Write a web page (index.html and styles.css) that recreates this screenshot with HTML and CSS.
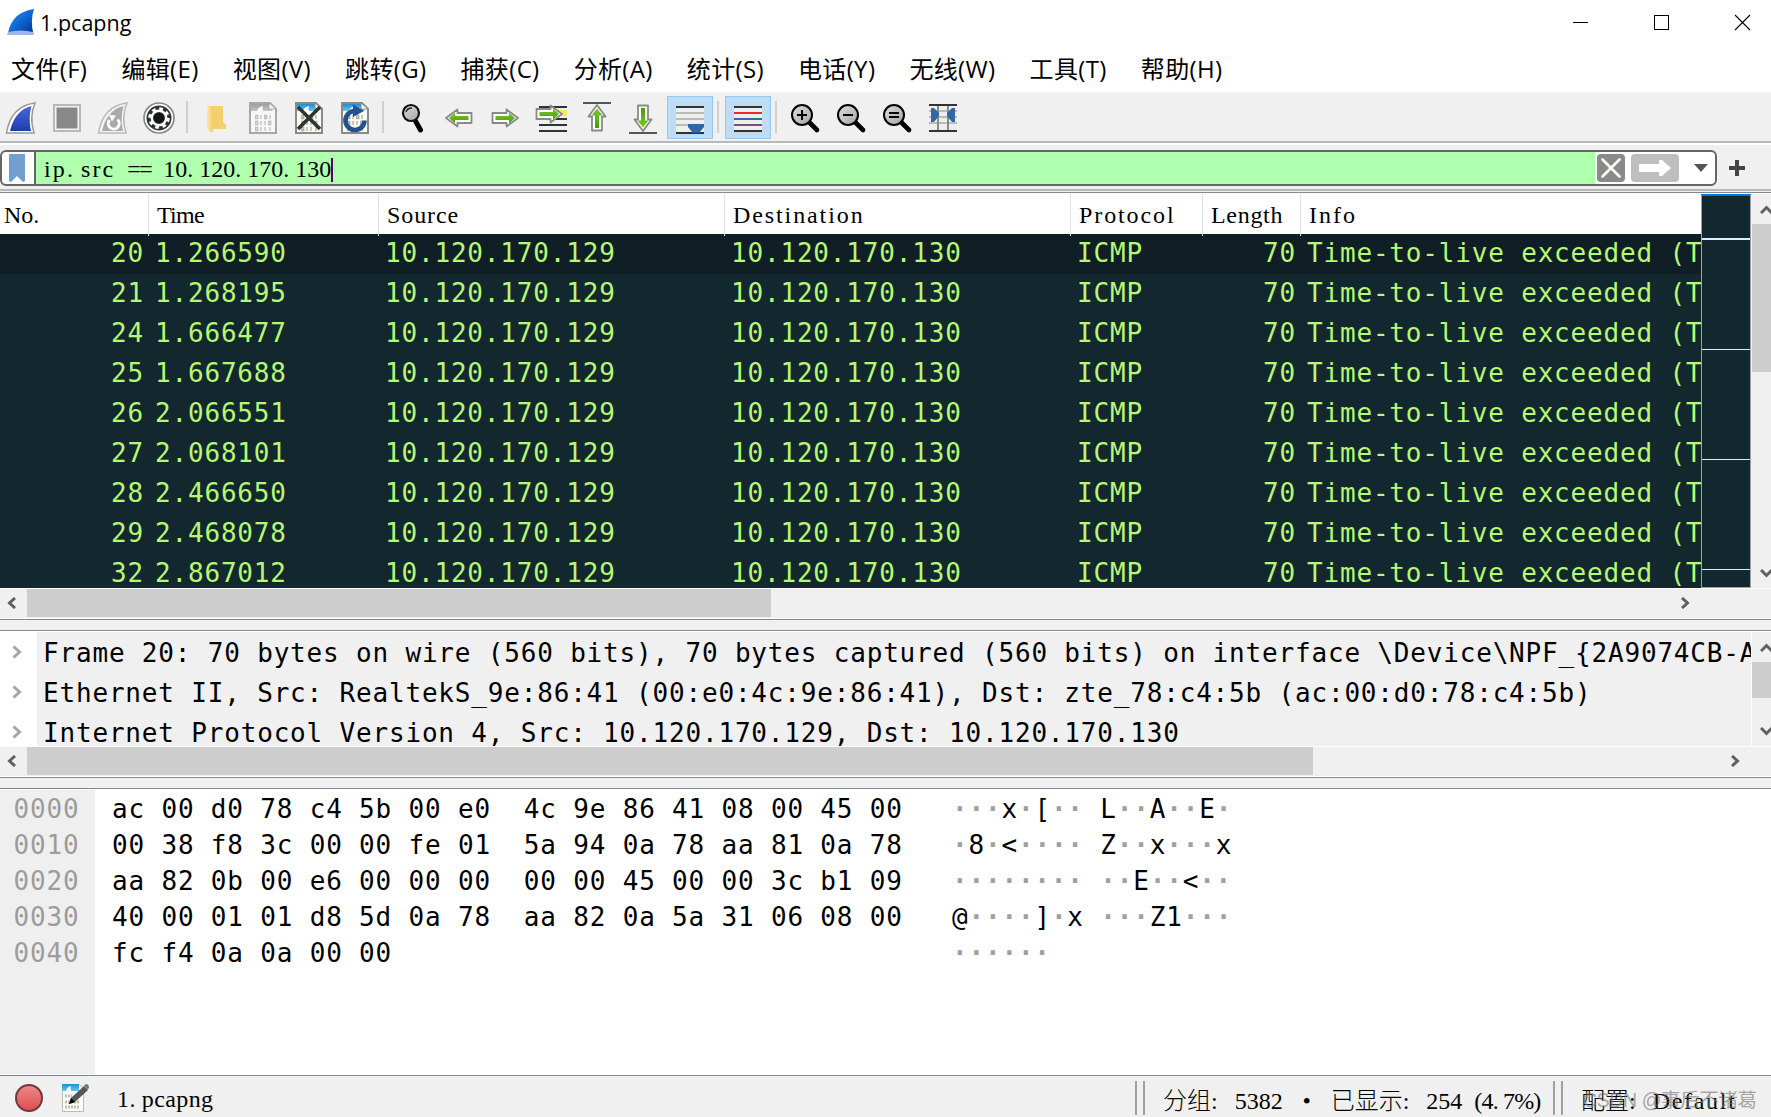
FILE: index.html
```
<!DOCTYPE html>
<html lang="zh-CN">
<head>
    <meta charset="UTF-8">
    <meta name="viewport" content="width=device-width, initial-scale=1.0">
    <title>1.pcapng</title>
    <link rel="stylesheet" href="styles.css">
</head>
<body>
    <!-- Shared gradients and symbols -->
    <svg class="defs" width="0" height="0">
        <defs>
            <linearGradient id="fin-blue" x1="0" y1="0" x2="1" y2="1">
                <stop offset="0" stop-color="#2a9af5"/>
                <stop offset="0.55" stop-color="#0b62d0"/>
                <stop offset="1" stop-color="#052f8c"/>
            </linearGradient>
            <linearGradient id="fin-start" x1="0" y1="0" x2="0" y2="1">
                <stop offset="0" stop-color="#4a66e0"/>
                <stop offset="1" stop-color="#1f3cae"/>
            </linearGradient>
            <linearGradient id="green" x1="0" y1="0" x2="0" y2="1">
                <stop offset="0" stop-color="#7acb2c"/>
                <stop offset="1" stop-color="#4a9a06"/>
            </linearGradient>
            <linearGradient id="folder" x1="0" y1="0" x2="1" y2="0">
                <stop offset="0" stop-color="#ffe9a4"/>
                <stop offset="1" stop-color="#f2cc66"/>
            </linearGradient>
            <linearGradient id="sky" x1="0" y1="0" x2="0" y2="1">
                <stop offset="0" stop-color="#1c8fd0"/>
                <stop offset="1" stop-color="#6cc4f0"/>
            </linearGradient>
            <linearGradient id="lens" x1="0" y1="0" x2="1" y2="1">
                <stop offset="0" stop-color="#dedede"/>
                <stop offset="1" stop-color="#a4a4a4"/>
            </linearGradient>
            <linearGradient id="red" x1="0" y1="0" x2="0" y2="1">
                <stop offset="0" stop-color="#ef8a8a"/>
                <stop offset="1" stop-color="#de4c4c"/>
            </linearGradient>
        </defs>
        <symbol id="arrow-right" viewBox="0 0 28 20">
            <path d="M1.500 5h14V1.500L27 10 15.500 18.500V15h-14z" fill="#fff" stroke="#888a85" stroke-width="1.800" stroke-linejoin="round"/>
            <path d="M4.500 8h13.500V4.500l6 5.500-6 5.500V12H4.500z" fill="url(#green)"/>
        </symbol>
        <symbol id="arrow-up" viewBox="0 0 20 28">
            <path d="M5 26.500v-14H1.500L10 1l8.500 11.500H15v14z" fill="#fff" stroke="#888a85" stroke-width="1.800" stroke-linejoin="round"/>
            <path d="M8 24V11.500H4.500l5.500-7 5.500 7H12V24z" fill="url(#green)"/>
        </symbol>
        <symbol id="magnifier" viewBox="0 0 32 32">
            <path d="M20 20l8 8" stroke="#000" stroke-width="4.600" stroke-linecap="round"/>
            <circle cx="13" cy="13" r="10" fill="url(#lens)" stroke="#000" stroke-width="2"/>
        </symbol>
        <symbol id="bits" viewBox="0 0 32 32">
            <path d="M3 1h20l6 6v24H3z" fill="#fbfbf2" stroke="#888a85" stroke-width="2"/>
            <path d="M4 2h18v3l4 4H4z" fill="url(#sky)"/>
            <path d="M22 1v6h7z" fill="#fff" stroke="#888a85"/>
            <path d="M10 9q1-4 6-5-1 3 0 5z" fill="#fff"/>
            <g fill="none" stroke="#aaa" stroke-width="1.300">
                <path d="M8.700 13.500h2v3h-2zM14 13v4M17.700 13.500h2v3h-2zM23 13v4"/>
                <path d="M8.700 19.500h2v3h-2zM14 19v4M18 19v4M21.700 19.500h2v3h-2z"/>
                <path d="M8.700 25.500h2v3h-2zM14 25v4M18 25v4M23 25v4"/>
            </g>
        </symbol>
    </svg>

    <div class="titlebar">
        <svg class="app-icon" width="28" height="28" viewBox="0 0 28 28">
            <path d="M1 24Q5 3 27 0q-4 12-.5 25z" fill="url(#fin-blue)"/>
            <path d="M1 23q13-3 25 0l.500 3H0z" fill="#9db9e6"/>
        </svg>
        <span class="title">1.pcapng</span>
        <div class="window-buttons">
            <svg width="17" height="17" viewBox="0 0 17 17"><path d="M1 8.500h15" stroke="#000"/></svg>
            <svg width="17" height="17" viewBox="0 0 17 17"><rect x="1.500" y="1.500" width="14" height="14" fill="none" stroke="#000"/></svg>
            <svg width="17" height="17" viewBox="0 0 17 17"><path d="M1 1l15 15M16 1L1 16" stroke="#000" stroke-width="1.100"/></svg>
        </div>
    </div>

    <div class="menubar">
        <span>文件(F)</span>
        <span>编辑(E)</span>
        <span>视图(V)</span>
        <span>跳转(G)</span>
        <span>捕获(C)</span>
        <span>分析(A)</span>
        <span>统计(S)</span>
        <span>电话(Y)</span>
        <span>无线(W)</span>
        <span>工具(T)</span>
        <span>帮助(H)</span>
    </div>

    <div class="toolbar">
        <div class="tool">
            <svg viewBox="0 0 32 32"><path d="M1.500 31Q6 4 30 1q-6 14-1 30z" fill="#fff" stroke="#999" stroke-width="1.500"/><path d="M5 29Q10 8 26.500 4q-3.500 12-.5 25z" fill="url(#fin-start)"/></svg>
        </div>
        <div class="tool">
            <svg viewBox="0 0 32 32"><rect x="3" y="3" width="26" height="26" fill="#f4f4f4" stroke="#b8b8b8" stroke-width="2"/><rect x="5.500" y="5.500" width="21" height="21" fill="#888"/></svg>
        </div>
        <div class="tool">
            <svg viewBox="0 0 32 32"><path d="M1.500 31Q6 4 30 1q-6 14-1 30z" fill="#f4f4f4" stroke="#b8b8b8" stroke-width="1.500"/><path d="M5 29Q10 8 26.500 4q-3.500 12-.5 25z" fill="#a9a9a9"/><path d="M12.500 18a5.500 5.500 0 1 0 8-.5" fill="none" stroke="#fff" stroke-width="3"/><path d="M12 13l7 .500-4 6z" fill="#fff"/></svg>
        </div>
        <div class="tool">
            <svg viewBox="0 0 32 32">
                <circle cx="16" cy="16" r="15" fill="#fff" stroke="#888" stroke-width="1.700"/>
                <circle cx="16" cy="16" r="12.500" fill="#2e3436"/>
                <circle cx="16" cy="16" r="7.200" fill="none" stroke="#fff" stroke-width="2.400"/>
                <circle cx="16" cy="16" r="9.400" fill="none" stroke="#fff" stroke-width="2.800" stroke-dasharray="3.700 3.680"/>
                <circle cx="16" cy="16" r="5.300" fill="#151515"/>
            </svg>
        </div>
        <div class="separator"></div>
        <div class="tool">
            <svg viewBox="0 0 32 32"><path d="M8 4h14v16l3 3v4H11z" fill="#f3cf6e"/><path d="M6 3l6 4v22l-1 2-5-4z" fill="url(#folder)"/></svg>
        </div>
        <div class="tool grayed">
            <svg viewBox="0 0 32 32"><use href="#bits"/></svg>
        </div>
        <div class="tool">
            <svg viewBox="0 0 32 32"><use href="#bits"/><path d="M5 5l22 22M27 5L5 27" stroke="#2e3436" stroke-width="3.600"/></svg>
        </div>
        <div class="tool">
            <svg viewBox="0 0 32 32"><use href="#bits"/><path d="M15 9a9.500 9.500 0 1 0 10.500 9.500" fill="none" stroke="#24508f" stroke-width="4.600"/><path d="M14 2.500l11 6.500-11 6z" fill="#24508f"/></svg>
        </div>
        <div class="separator"></div>
        <div class="tool">
            <svg viewBox="0 0 32 32"><path d="M18.500 19l5 9" stroke="#000" stroke-width="5" stroke-linecap="round"/><circle cx="14" cy="11" r="8" fill="url(#lens)" stroke="#111" stroke-width="2.200"/><path d="M9 10q1-4 6-4" fill="none" stroke="#222" stroke-width="1.300"/></svg>
        </div>
        <div class="tool">
            <svg viewBox="0 0 32 32"><use href="#arrow-right" x="2" y="6" width="28" height="20" transform="matrix(-1 0 0 1 32 0)"/></svg>
        </div>
        <div class="tool">
            <svg viewBox="0 0 32 32"><use href="#arrow-right" x="2" y="6" width="28" height="20"/></svg>
        </div>
        <div class="tool">
            <svg viewBox="0 0 32 32"><path d="M4 5h28M4 17h28M4 23h28M4 29h28" stroke="#2e3436" stroke-width="2"/><path d="M20 8h12v6H20z" fill="#fce94f"/><use href="#arrow-right" x="0" y="2" width="28" height="20"/></svg>
        </div>
        <div class="tool">
            <svg viewBox="0 0 32 32"><path d="M2 1h28" stroke="#555753" stroke-width="2"/><use href="#arrow-up" x="6" y="2" width="20" height="28"/></svg>
        </div>
        <div class="tool">
            <svg viewBox="0 0 32 32"><path d="M2 31h28" stroke="#555753" stroke-width="2"/><use href="#arrow-up" x="6" y="2" width="20" height="28" transform="matrix(1 0 0 -1 0 32)"/></svg>
        </div>
        <div class="tool active first-active">
            <svg viewBox="0 0 32 32"><path d="M2 5h28v25H2z" fill="#eeeeec"/><path d="M2 11h28M2 17h28M2 23h28" stroke="#babdb6" stroke-width="2"/><path d="M2 5h28M2 31h28" stroke="#2e3436" stroke-width="2"/><path d="M14 22h16v3l-5 6h-6l-5-6z" fill="#3465a4"/></svg>
        </div>
        <div class="separator short"></div>
        <div class="tool active">
            <svg viewBox="0 0 32 32"><path d="M2 5h28v25H2z" fill="#eeeeec"/><path d="M2 5h28M2 29h28" stroke="#2e3436" stroke-width="2"/><path d="M2 11h28" stroke="#ef2929" stroke-width="2"/><path d="M2 17h28" stroke="#3465a4" stroke-width="2"/><path d="M2 23h28" stroke="#75507b" stroke-width="2"/></svg>
        </div>
        <div class="separator short"></div>
        <div class="tool">
            <svg viewBox="0 0 32 32"><use href="#magnifier"/><path d="M8 13h10M13 8v10" stroke="#000" stroke-width="2"/></svg>
        </div>
        <div class="tool">
            <svg viewBox="0 0 32 32"><use href="#magnifier"/><path d="M8 13h10" stroke="#000" stroke-width="2"/></svg>
        </div>
        <div class="tool">
            <svg viewBox="0 0 32 32"><use href="#magnifier"/><path d="M8 11h10M8 15h10" stroke="#000" stroke-width="2"/></svg>
        </div>
        <div class="tool">
            <svg viewBox="0 0 32 32"><path d="M2 3h28v26H2z" fill="#eeeeec"/><path d="M2 9h28M2 15h28M2 21h28" stroke="#babdb6" stroke-width="2"/><path d="M11 2v28M21 2v28" stroke="#888a85" stroke-width="2"/><path d="M2 3h28M2 29h28" stroke="#2e3436" stroke-width="2"/><path d="M4 6h3l5 5v3l-5 6H4zM28 6h-3l-5 5v3l5 6h3z" fill="#3465a4"/></svg>
        </div>
    </div>

    <div class="filterbar">
        <div class="filter">
            <div class="bookmark"><svg width="16" height="28" viewBox="0 0 16 28"><path d="M0 1q0-1 1-1h14q1 0 1 1v26l-2 1-6-6-6 6-2-1z" fill="#729fcf"/></svg></div>
            <div class="filter-text"><span class="wide">ip<i>.</i>src</span> <span class="tight">==</span> 10<i>.</i>120<i>.</i>170<i>.</i>130<b class="caret"></b></div>
            <div class="filter-buttons">
                <svg width="28" height="28" viewBox="0 0 28 28"><rect width="28" height="28" rx="4" fill="#888a85"/><path d="M5.500 5.500l17 17M22.500 5.500l-17 17" stroke="#fff" stroke-width="2.600" stroke-linecap="round"/></svg>
                <svg width="48" height="28" viewBox="0 0 48 28"><rect width="48" height="28" rx="4" fill="#bebebe"/><path d="M9 10h19V6h3l9 8-9 8h-3v-4H9q-1 0-1-1v-6q0-1 1-1z" fill="#fff"/></svg>
                <svg class="dropdown" width="14" height="8" viewBox="0 0 14 8"><path d="M0 0h14L7 8z" fill="#555753"/></svg>
            </div>
        </div>
        <svg width="16" height="16" viewBox="0 0 16 16"><path d="M8 0v16M0 8h16" stroke="#444" stroke-width="4"/></svg>
    </div>

    <div class="pane packets">
        <div class="pane-body">
            <div class="list">
                <div class="row header">
                    <span>No.</span><span>Time</span><span>Source</span><span>Destination</span><span>Protocol</span><span>Length</span><span>Info</span>
                </div>
                <div class="rows">
                    <div class="row selected"><span>20</span><span>1.266590</span><span>10.120.170.129</span><span>10.120.170.130</span><span>ICMP</span><span>70</span><span>Time-to-live exceeded (T</span></div>
                    <div class="row"><span>21</span><span>1.268195</span><span>10.120.170.129</span><span>10.120.170.130</span><span>ICMP</span><span>70</span><span>Time-to-live exceeded (T</span></div>
                    <div class="row"><span>24</span><span>1.666477</span><span>10.120.170.129</span><span>10.120.170.130</span><span>ICMP</span><span>70</span><span>Time-to-live exceeded (T</span></div>
                    <div class="row"><span>25</span><span>1.667688</span><span>10.120.170.129</span><span>10.120.170.130</span><span>ICMP</span><span>70</span><span>Time-to-live exceeded (T</span></div>
                    <div class="row"><span>26</span><span>2.066551</span><span>10.120.170.129</span><span>10.120.170.130</span><span>ICMP</span><span>70</span><span>Time-to-live exceeded (T</span></div>
                    <div class="row"><span>27</span><span>2.068101</span><span>10.120.170.129</span><span>10.120.170.130</span><span>ICMP</span><span>70</span><span>Time-to-live exceeded (T</span></div>
                    <div class="row"><span>28</span><span>2.466650</span><span>10.120.170.129</span><span>10.120.170.130</span><span>ICMP</span><span>70</span><span>Time-to-live exceeded (T</span></div>
                    <div class="row"><span>29</span><span>2.468078</span><span>10.120.170.129</span><span>10.120.170.130</span><span>ICMP</span><span>70</span><span>Time-to-live exceeded (T</span></div>
                    <div class="row"><span>32</span><span>2.867012</span><span>10.120.170.129</span><span>10.120.170.130</span><span>ICMP</span><span>70</span><span>Time-to-live exceeded (T</span></div>
                </div>
            </div>
            <div class="minimap"><i></i><i></i><i></i><i></i></div>
            <div class="vscroll">
                <svg width="14" height="9" viewBox="0 0 14 9"><path d="M1 8l5.500-5.500L12 8" fill="none" stroke="#606060" stroke-width="3"/></svg>
                <div class="thumb"></div>
                <svg width="14" height="9" viewBox="0 0 14 9"><path d="M1 1l5.500 5.500L12 1" fill="none" stroke="#606060" stroke-width="3"/></svg>
            </div>
        </div>
        <div class="hscroll">
            <svg width="9" height="12" viewBox="0 0 9 12"><path d="M8 1L2.500 6 8 11" fill="none" stroke="#606060" stroke-width="3"/></svg>
            <div class="thumb"></div>
            <svg width="9" height="12" viewBox="0 0 9 12"><path d="M1 1l5.500 5L1 11" fill="none" stroke="#606060" stroke-width="3"/></svg>
        </div>
    </div>

    <div class="pane details">
        <div class="pane-body">
            <div class="tree">
                <div class="node"><svg width="10" height="14" viewBox="0 0 10 14"><path d="M1.500 1.500L7.500 7l-6 5.500" fill="none" stroke="#a6a6a6" stroke-width="3"/></svg><span>Frame 20: 70 bytes on wire (560 bits), 70 bytes captured (560 bits) on interface \Device\NPF_{2A9074CB-A</span></div>
                <div class="node"><svg width="10" height="14" viewBox="0 0 10 14"><path d="M1.500 1.500L7.500 7l-6 5.500" fill="none" stroke="#a6a6a6" stroke-width="3"/></svg><span>Ethernet II, Src: RealtekS_9e:86:41 (00:e0:4c:9e:86:41), Dst: zte_78:c4:5b (ac:00:d0:78:c4:5b)</span></div>
                <div class="node"><svg width="10" height="14" viewBox="0 0 10 14"><path d="M1.500 1.500L7.500 7l-6 5.500" fill="none" stroke="#a6a6a6" stroke-width="3"/></svg><span>Internet Protocol Version 4, Src: 10.120.170.129, Dst: 10.120.170.130</span></div>
            </div>
            <div class="vscroll">
                <svg width="14" height="9" viewBox="0 0 14 9"><path d="M1 8l5.500-5.500L12 8" fill="none" stroke="#606060" stroke-width="3"/></svg>
                <div class="thumb"></div>
                <svg width="14" height="9" viewBox="0 0 14 9"><path d="M1 1l5.500 5.500L12 1" fill="none" stroke="#606060" stroke-width="3"/></svg>
            </div>
        </div>
        <div class="hscroll">
            <svg width="9" height="12" viewBox="0 0 9 12"><path d="M8 1L2.500 6 8 11" fill="none" stroke="#606060" stroke-width="3"/></svg>
            <div class="thumb"></div>
            <svg width="9" height="12" viewBox="0 0 9 12"><path d="M1 1l5.500 5L1 11" fill="none" stroke="#606060" stroke-width="3"/></svg>
        </div>
    </div>

    <div class="pane hexdump">
<pre class="offsets">0000
0010
0020
0030
0040</pre>
<pre class="bytes">ac 00 d0 78 c4 5b 00 e0  4c 9e 86 41 08 00 45 00
00 38 f8 3c 00 00 fe 01  5a 94 0a 78 aa 81 0a 78
aa 82 0b 00 e6 00 00 00  00 00 45 00 00 3c b1 09
40 00 01 01 d8 5d 0a 78  aa 82 0a 5a 31 06 08 00
fc f4 0a 0a 00 00</pre>
<pre class="ascii">···<b>x</b>·<b>[</b>·· <b>L</b>··<b>A</b>··<b>E</b>·
·<b>8</b>·<b>&lt;</b>···· <b>Z</b>··<b>x</b>···<b>x</b>
········ ··<b>E</b>··<b>&lt;</b>··
<b>@</b>····<b>]</b>·<b>x</b> ···<b>Z1</b>···
······</pre>
    </div>

    <div class="statusbar">
        <svg class="expert" width="28" height="28" viewBox="0 0 28 28"><circle cx="14" cy="14" r="13" fill="url(#red)" stroke="#6b3a3e" stroke-width="2"/></svg>
        <svg class="comment" width="28" height="28" viewBox="0 0 28 28">
            <path d="M.500.500h17l4 4v23H.500z" fill="#fbfbf4" stroke="#bbb"/>
            <path d="M0 0h17v7H0z" fill="url(#sky)"/>
            <path d="M4 7q1-4 5-5-1 2 0 5z" fill="#fff"/>
            <path d="M3 12h7M3 18h15M3 23h15" stroke="#bbb" stroke-width="3" stroke-dasharray="2 1"/>
            <path d="M7 20l2-6L22 2l4 4-13 12z" fill="#555753"/>
            <path d="M7 20l2-6 4 4z" fill="#000"/>
            <path d="M22 1.500l2-1.500q3 0 3 4l-1.500 1.500z" fill="#777"/>
        </svg>
        <span class="file">1<i>.</i>pcapng</span>
        <div class="status packets-count"><span><em>分组</em><i>:</i> 5382 <u>•</u> <em>已显示</em><i>:</i> 254 <span class="percent">(4<i>.</i>7%)</span></span></div>
        <div class="status profile"><span><em>配置</em><i>:</i> <span class="default">Default</span></span></div>
        <span class="watermark">CSDN @事后不诸葛</span>
    </div>
</body>
</html>
```
FILE: styles.css
```
* {
    box-sizing: border-box;
}
body {
    margin: 0;
    width: 1771px;
    height: 1117px;
    overflow: hidden;
    display: flex;
    flex-direction: column;
    background: #f0f0f0;
    color: #000;
    font-family: "Liberation Serif", "Noto Sans CJK SC", serif;
    font-size: 24px;
}
svg {
    display: block;
    flex-shrink: 0;
}
.defs {
    position: absolute;
}

/* Title and menu */
.titlebar {
    height: 45px;
    display: flex;
    align-items: center;
    padding: 0 20px 0 7px;
    background: #fff;
    font-family: "Open Sans", sans-serif;
    font-size: 21.5px;
}
.title {
    margin-left: 5px;
}
.window-buttons {
    margin-left: auto;
    display: flex;
    gap: 64px;
}
.menubar {
    height: 48px;
    display: flex;
    align-items: center;
    gap: 34.1px;
    padding: 0 11px;
    background: #fff;
    border-bottom: 1px solid #f4f4f4;
    font-family: "Open Sans", "Noto Sans CJK SC", sans-serif;
    font-size: 24px;
    letter-spacing: 0.35px;
    line-height: 46px;
    white-space: nowrap;
}

/* Toolbar */
.toolbar {
    height: 52px;
    display: flex;
    padding: 3px 0 0;
    border-bottom: 2px solid #fff;
    box-shadow: inset 0 -2px #b8b8b8;
}
.tool {
    width: 46px;
    height: 43px;
    display: flex;
    align-items: center;
    justify-content: center;
}
.tool:first-child {
    margin-left: -2px;
}
.tool svg {
    width: 32px;
    height: 32px;
    margin-top: 1px;
}
.tool.active {
    background: #c0dcf3;
    border: 1px solid #90c8f6;
}
.first-active {
    margin-left: 1px;
}
.grayed {
    filter: grayscale(1);
    opacity: 0.7;
}
.separator {
    width: 2px;
    height: 32px;
    margin: 5px 6px 0 4px;
    background: #d0d0d0;
}
.separator.short {
    margin-left: 4px;
}
.separator.short + .tool:not(.active) {
    margin-left: -1px;
}

/* Display filter */
.filterbar {
    height: 47px;
    display: flex;
    align-items: center;
    gap: 12px;
    border-bottom: 1px solid #f0f0f0;
    box-shadow: inset 0 -2px #b8b8b8;
}
.filter {
    width: 1717px;
    height: 36px;
    display: flex;
    border: 2px solid #666;
    border-radius: 6px;
    background: #fff;
    overflow: hidden;
}
.bookmark {
    width: 34px;
    padding: 2px 0 0 7px;
    border-right: 2px solid #666;
}
.filter-text {
    width: 1559px;
    padding-left: 8px;
    background: #afffaf;
    line-height: 34px;
    word-spacing: 6px;
    white-space: pre;
}

/* Full-cell punctuation */
i {
    margin-right: 6px;
    font-style: normal;
}
.wide {
    letter-spacing: 2.1px;
}
.tight {
    letter-spacing: -1.5px;
}
.caret {
    display: inline-block;
    width: 2px;
    height: 24px;
    vertical-align: -5px;
    background: #5c005c;
}
.filter-buttons {
    display: flex;
    align-items: center;
    gap: 6px;
    padding-left: 2px;
}
.dropdown {
    margin-left: 9px;
}

/* Panes */
.pane {
    border-top: 1px solid #828790;
    border-bottom: 1px solid #828790;
    margin-bottom: 10px;
}
.pane-body {
    display: flex;
    border-top: 1px solid #fff;
    border-bottom: 1px solid #fff;
}
.packets .pane-body {
    height: 396px;
}
.list {
    width: 1701px;
    overflow: hidden;
    background: #12272e;
}
.row {
    display: grid;
    grid-template-columns: 149px 230px 346px 346px 132px 98px 400px;
    height: 40px;
    line-height: 38px;
    white-space: pre;
}
.header {
    background: #fff;
    line-height: 42px;
}
.header span {
    padding: 0 0 0 8px;
    border-right: 1px solid #e2e2e2;
}
.header span:first-child {
    padding-left: 4px;
}
.header span:nth-child(2) {
    letter-spacing: -0.7px;
}
.header span:nth-child(3) {
    letter-spacing: 0.9px;
}
.header span:nth-child(4),
.header span:nth-child(5) {
    letter-spacing: 1.9px;
}
.header span:nth-child(6) {
    letter-spacing: 0.7px;
}
.header span:last-child {
    border: 0;
    letter-spacing: 2px;
}
.rows,
.tree,
.hexdump {
    font-family: "DejaVu Sans Mono", monospace;
    font-size: 26px;
    letter-spacing: 0.82px;
}
.rows {
    color: #b7f774;
}
.rows span {
    padding-left: 6px;
}
.rows span:first-child,
.rows span:nth-child(6) {
    text-align: right;
    padding-right: 5px;
}
.selected {
    background: #101f26;
}
.minimap {
    width: 50px;
    padding-top: 42px;
    border: 1px solid #a0a0a0;
    border-top: 2px solid #0078d7;
    background: #12272e;
}
.minimap i {
    display: block;
    height: 1px;
    margin: 0 0 109px;
    background: #daeeff;
}
.minimap i:first-child {
    height: 2px;
}
.vscroll {
    width: 19px;
    margin-left: auto;
    display: flex;
    flex-direction: column;
    overflow: hidden;
}
.vscroll svg {
    margin: 11px 0 10px 8px;
}
.vscroll svg:last-child {
    margin: auto 0 10px 8px;
}
.thumb {
    background: #cdcdcd;
}
.packets .vscroll .thumb {
    height: 148px;
}
.details .vscroll .thumb {
    height: 36px;
}
.hscroll {
    height: 30px;
    display: flex;
    align-items: center;
    padding: 0 81px 1px 7px;
    border-bottom: 1px solid #fff;
}
.hscroll .thumb {
    width: 744px;
    height: 28px;
    margin: 0 auto 0 11px;
}
.details .hscroll {
    padding-right: 31px;
}
.details .hscroll .thumb {
    width: 1286px;
}

/* Packet details */
.details .pane-body {
    height: 116px;
}
.tree {
    width: 1752px;
    border-right: 1px solid #fff;
    overflow: hidden;
}
.node {
    height: 40px;
    display: flex;
    align-items: center;
    padding-left: 12px;
    background: linear-gradient(to right, #fff 37px, #f0f0f0 37px);
    line-height: 40px;
    white-space: pre;
}
.node span {
    margin: 2px 0 0 21px;
}

/* Packet bytes */
.hexdump {
    height: 288px;
    margin-bottom: 0;
    display: flex;
    background: #fff;
}
.hexdump pre {
    margin: 1px 0;
    padding-top: 1px;
    font: inherit;
    line-height: 36px;
}
.hexdump .offsets {
    width: 95px;
    padding-left: 13.5px;
    background: #efefef;
    color: #9c9c9c;
}
.hexdump .bytes {
    width: 840px;
    margin-left: 17px;
}
.hexdump .ascii {
    color: #a0a0a0;
    font-weight: bold;
}
.ascii b {
    font-weight: normal;
    color: #000;
}

/* Status bar */
.statusbar {
    position: relative;
    flex: 1;
    display: flex;
    align-items: center;
    padding: 3px 0 0 15px;
    word-spacing: 6px;
    white-space: pre;
}
.statusbar em {
    font-style: normal;
    font-weight: 300;
}
.statusbar u {
    display: inline-block;
    width: 24px;
    text-align: center;
    text-decoration: none;
}
.comment {
    margin-left: 19px;
}
.file {
    width: 1018px;
    margin-left: 27px;
    padding-top: 2px;
    letter-spacing: 0.4px;
}
.status {
    height: 34px;
    display: flex;
    align-items: center;
    padding-left: 26px;
    border-left: 2px solid #a0a0a0;
    box-shadow: inset 6px 0 #f0f0f0, inset 8px 0 #a0a0a0;
}
.status i {
    margin-right: 5px;
}
.packets-count {
    width: 418px;
}
.percent {
    letter-spacing: -0.8px;
}
.profile {
    padding-left: 26px;
}
.default {
    letter-spacing: 1.7px;
}
.watermark {
    position: absolute;
    left: 1583px;
    top: 8px;
    font-family: "Liberation Sans", "Noto Sans CJK SC", sans-serif;
    font-size: 19.5px;
    letter-spacing: -0.4px;
    word-spacing: 0;
    color: rgba(120, 120, 120, 0.65);
}
```
